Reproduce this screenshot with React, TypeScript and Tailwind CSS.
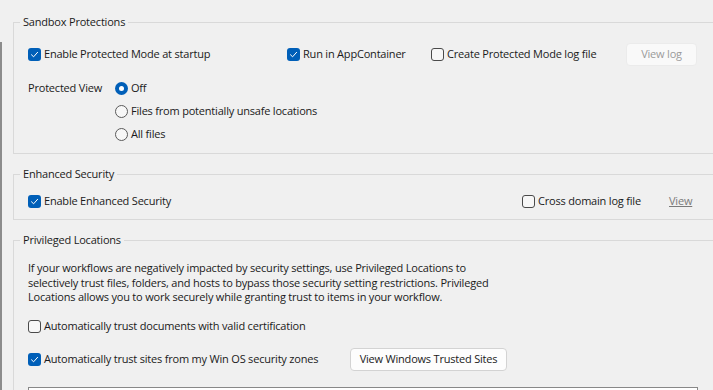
import type { ReactNode } from "react";

function Check({ on }: { on?: boolean }) {
  if (on) {
    return (
      <span className="flex h-[13px] w-[13px] shrink-0 items-center justify-center rounded-[3px] bg-[#005fb8]">
        <svg width="9" height="9" viewBox="0 0 9 9" fill="none">
          <path d="M1.5 4.8 L3.6 6.8 L7.6 2.3" stroke="#fff" strokeWidth="1" strokeLinecap="round" strokeLinejoin="round" />
        </svg>
      </span>
    );
  }
  return <span className="h-[13px] w-[13px] shrink-0 rounded-[3px] border border-[#4a4a4a] bg-[#f7f7f7]" />;
}

function Radio({ on }: { on?: boolean }) {
  if (on) {
    return (
      <span className="flex h-[13px] w-[13px] shrink-0 items-center justify-center rounded-full bg-[#005fb8]">
        <span className="h-[5px] w-[5px] rounded-full bg-white" />
      </span>
    );
  }
  return <span className="h-[13px] w-[13px] shrink-0 rounded-full border border-[#5a5a5a] bg-[#f7f7f7]" />;
}

function Option({ on, radio, children, className = "" }: { on?: boolean; radio?: boolean; children: ReactNode; className?: string }) {
  return (
    <label className={`flex h-[23px] items-center gap-[3px] ${className}`}>
      {radio ? <Radio on={on} /> : <Check on={on} />}
      <span className="whitespace-nowrap">{children}</span>
    </label>
  );
}

function Group({ title, children, className = "" }: { title: string; children: ReactNode; className?: string }) {
  return (
    <fieldset className={`w-[702px] border border-[#d9d9d9] ${className}`}>
      <legend className="ml-[6px] px-[3px] leading-[16px] text-[#1b1b1b]">{title}</legend>
      <div className="pr-[16px] pl-[14px]">{children}</div>
    </fieldset>
  );
}

export default function App() {
  return (
    <div className="flex h-[390px] w-[713px] overflow-hidden bg-[#f0f0f0] font-['Open_Sans','Noto_Sans',sans-serif] text-[11px] tracking-[-0.2px] text-[#1a1a1a]">
      <div className="mt-[42px] w-[2px] shrink-0 bg-[#8c8c8c]" />
      <div className="flex flex-col pl-[11px] pt-[14px]">
        <Group title="Sandbox Protections" className="pt-[13px] pb-[7px]">
          <div className="flex items-center">
            <Option on className="w-[259px]">Enable Protected Mode at startup</Option>
            <Option on className="w-[144px]">Run in AppContainer</Option>
            <Option className="w-[195px]">Create Protected Mode log file</Option>
            <button className="h-[23px] w-[71px] rounded-[4px] border border-[#ebebeb] bg-[#f9f9f9] text-[#9b9b9b]">View log</button>
          </div>
          <div className="mt-[11px] flex">
            <span className="flex h-[23px] w-[87px] items-center">Protected View</span>
            <div className="flex flex-col">
              <Option radio on>Off</Option>
              <Option radio>Files from potentially unsafe locations</Option>
              <Option radio>All files</Option>
            </div>
          </div>
        </Group>

        <Group title="Enhanced Security" className="mt-[12px] pt-[8px] pb-[6px]">
          <div className="flex items-center">
            <Option on className="w-[494px]">Enable Enhanced Security</Option>
            <Option className="w-[147px]">Cross domain log file</Option>
            <span className="text-[#7a7a7a] underline">View</span>
          </div>
        </Group>

        <Group title="Privileged Locations" className="mt-[12px] pt-[13px]">
          <p className="whitespace-nowrap leading-[14.5px]">
            If your workflows are negatively impacted by security settings, use Privileged Locations to
            <br />
            selectively trust files, folders, and hosts to bypass those security setting restrictions. Privileged
            <br />
            Locations allows you to work securely while granting trust to items in your workflow.
          </p>
          <Option className="mt-[10px]">Automatically trust documents with valid certification</Option>
          <div className="mt-[10px] flex items-center">
            <Option on className="w-[322px]">Automatically trust sites from my Win OS security zones</Option>
            <button className="h-[23px] w-[157px] whitespace-nowrap rounded-[4px] border border-[#d3d3d3] bg-[#fdfdfd]">View Windows Trusted Sites</button>
          </div>
          <div className="mt-[16px] h-[60px] w-[670px] border border-[#888888] bg-white" />
        </Group>
      </div>
    </div>
  );
}
